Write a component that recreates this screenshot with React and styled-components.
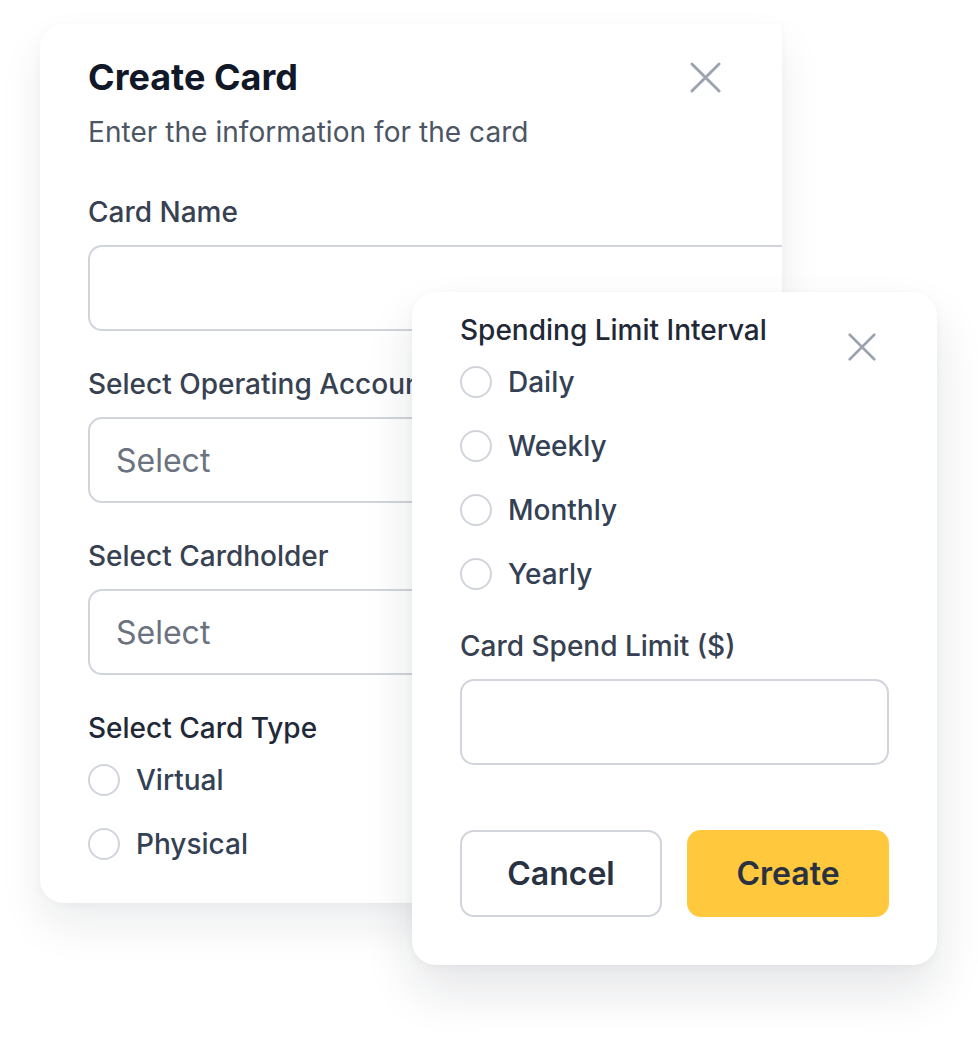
import React from "react";
import styled, { createGlobalStyle } from "styled-components";

const GlobalStyle = createGlobalStyle`
  html, body {
    margin: 0;
    padding: 0;
    background: #ffffff;
  }
  body {
    font-family: Inter, "Noto Sans", "Liberation Sans", sans-serif;
    -webkit-font-smoothing: antialiased;
  }
  * {
    box-sizing: border-box;
  }
`;

const Stage = styled.div`
  position: relative;
  width: 978px;
  height: 1046px;
  overflow: hidden;
  padding: 24px 0 0 40px;
`;

const Card = styled.section`
  position: ${(p) => (p.$floating ? "absolute" : "relative")};
  ${(p) => p.$floating && "left: 412px; top: 292px;"}
  width: ${(p) => p.$width}px;
  background: #ffffff;
  overflow: hidden;
  display: flex;
  flex-direction: column;
`;

const BackCard = styled(Card)`
  border-radius: 24px 0 0 24px;
  padding: 31px 0 39px 48px;
  box-shadow: 0 22px 44px rgba(15, 23, 42, 0.08), 0 2px 8px rgba(15, 23, 42, 0.03);
`;

const FrontCard = styled(Card)`
  border-radius: 24px;
  padding: 18px 48px 48px;
  box-shadow: 0 26px 50px rgba(15, 23, 42, 0.11), 0 2px 10px rgba(15, 23, 42, 0.04);
`;

const Title = styled.h2`
  margin: 0;
  font-size: 36px;
  line-height: 44px;
  font-weight: 700;
  color: #111827;
`;

const Subtitle = styled.p`
  margin: 13px 0 40px;
  font-size: 28px;
  line-height: 40px;
  font-weight: 400;
  color: #4b5563;
  letter-spacing: 0.05px;
`;

const CloseButton = styled.button`
  position: absolute;
  top: ${(p) => p.$top}px;
  right: 61px;
  width: ${(p) => p.$size}px;
  height: ${(p) => p.$size}px;
  padding: 0;
  border: none;
  background: none;
  display: flex;
  cursor: pointer;
`;

const Fields = styled.div`
  width: ${(p) => p.$width || "100%"};
  display: flex;
  flex-direction: column;
  gap: ${(p) => p.$gap}px;
`;

const Field = styled.div`
  display: flex;
  flex-direction: column;
`;

const Label = styled.label`
  font-size: 28px;
  line-height: 40px;
  font-weight: 500;
  color: ${(p) => (p.$strong ? "#1f2937" : "#374151")};
  white-space: nowrap;
`;

const Input = styled.div`
  margin-top: 13px;
  height: 86px;
  border: 2px solid #d1d5db;
  border-radius: 14px;
  background: #ffffff;
  display: flex;
  align-items: center;
  padding: 0 26px;
  font-size: 32px;
  color: #6b7280;
`;

const RadioGroup = styled.div`
  display: flex;
  flex-direction: column;
  gap: 24px;
  margin-top: 12px;
`;

const RadioRow = styled.div`
  display: flex;
  align-items: center;
  gap: 16px;
  height: 40px;
`;

const RadioDot = styled.span`
  width: 32px;
  height: 32px;
  border-radius: 50%;
  border: 2px solid #d1d5db;
  background: #ffffff;
  flex-shrink: 0;
`;

const RadioText = styled.span`
  font-size: 28px;
  line-height: 40px;
  font-weight: 500;
  color: #334155;
`;

const Actions = styled.div`
  margin-top: 65px;
  display: grid;
  grid-template-columns: 1fr 1fr;
  gap: 25px;
`;

const Button = styled.button`
  height: 87px;
  border-radius: 14px;
  font-family: inherit;
  font-size: 32px;
  font-weight: 600;
  color: #283242;
  border: ${(p) => (p.$primary ? "none" : "2px solid #d1d5db")};
  background: ${(p) => (p.$primary ? "#ffc83d" : "#ffffff")};
  cursor: pointer;
`;

const CloseIcon = ({ size }) => (
  <svg width={size} height={size} viewBox="0 0 32 32" fill="none">
    <path
      d="M2 2L30 30M30 2L2 30"
      stroke="#9ca3af"
      strokeWidth="3"
      strokeLinecap="round"
    />
  </svg>
);

const Radios = ({ options }) => (
  <RadioGroup>
    {options.map((opt) => (
      <RadioRow key={opt}>
        <RadioDot />
        <RadioText>{opt}</RadioText>
      </RadioRow>
    ))}
  </RadioGroup>
);

export default function App() {
  return (
    <>
      <GlobalStyle />
      <Stage>
        <BackCard $width={742}>
          <CloseButton $top={38} $size={31} aria-label="Close">
            <CloseIcon size={31} />
          </CloseButton>
          <Title>Create Card</Title>
          <Subtitle>Enter the information for the card</Subtitle>
          <Fields $width="780px" $gap={33}>
            <Field>
              <Label>Card Name</Label>
              <Input />
            </Field>
            <Field>
              <Label>Select Operating Account</Label>
              <Input>Select</Input>
            </Field>
            <Field>
              <Label>Select Cardholder</Label>
              <Input>Select</Input>
            </Field>
            <Field>
              <Label $strong>Select Card Type</Label>
              <Radios options={["Virtual", "Physical"]} />
            </Field>
          </Fields>
        </BackCard>

        <FrontCard $floating $width={525}>
          <CloseButton $top={41} $size={28} aria-label="Close">
            <CloseIcon size={28} />
          </CloseButton>
          <Fields $gap={32}>
            <Field>
              <Label $strong>Spending Limit Interval</Label>
              <Radios options={["Daily", "Weekly", "Monthly", "Yearly"]} />
            </Field>
            <Field>
              <Label>Card Spend Limit ($)</Label>
              <Input />
            </Field>
          </Fields>
          <Actions>
            <Button>Cancel</Button>
            <Button $primary>Create</Button>
          </Actions>
        </FrontCard>
      </Stage>
    </>
  );
}
